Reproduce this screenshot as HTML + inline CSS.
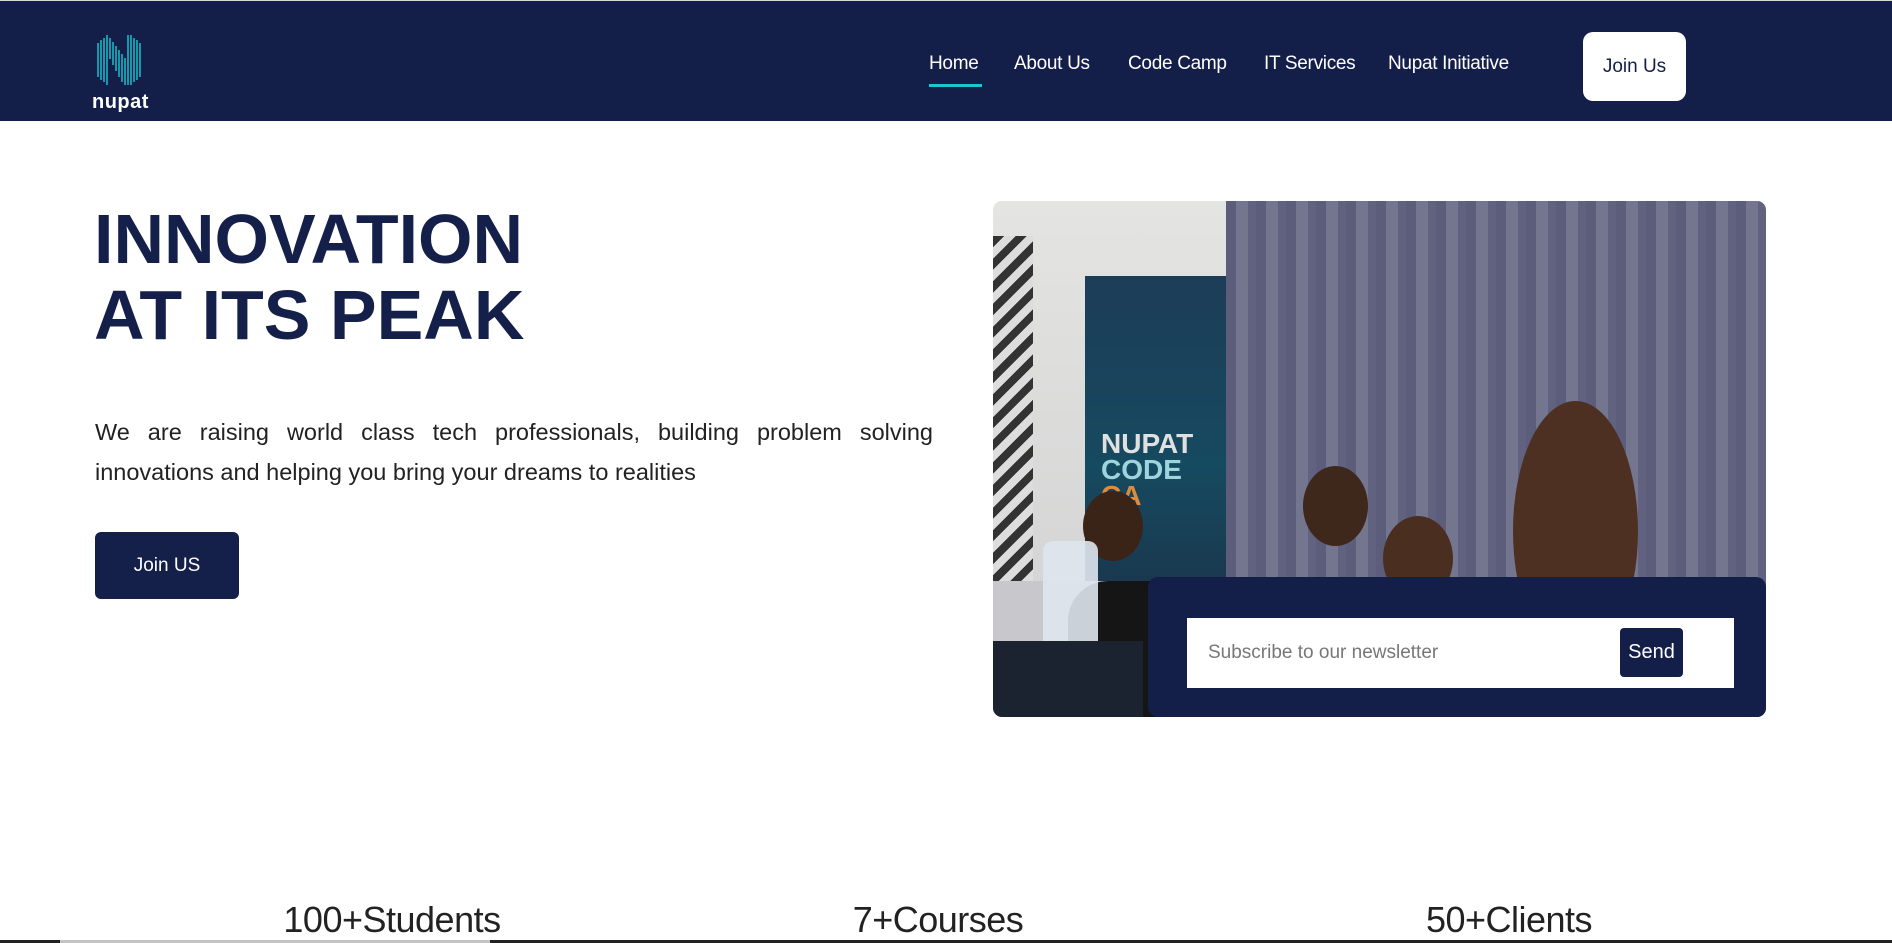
<!DOCTYPE html>
<html><head><meta charset="utf-8">
<style>
*{margin:0;padding:0;box-sizing:border-box}
html,body{width:1892px;height:943px;overflow:hidden;background:#fff;font-family:"Liberation Sans",sans-serif}
.nav{position:absolute;left:0;top:0;width:1892px;height:121px;background:#131e49;border-top:1px solid #d8d8d8}
.nav a{position:absolute;top:52px;color:#fff;font-size:19px;text-decoration:none;letter-spacing:-0.3px}
.ul{position:absolute;left:929px;top:83px;width:53px;height:3px;background:#18c7d3}
.jbtn{position:absolute;left:1583px;top:31px;width:103px;height:69px;background:#fff;border-radius:10px;color:#141f4a;font-size:19px;text-align:center;line-height:69px}
h1{position:absolute;left:94px;top:201px;font-size:70px;line-height:76px;color:#141f4a;font-weight:bold;letter-spacing:0px}
.p{position:absolute;left:95px;top:412px;width:838px;font-size:23.5px;line-height:40px;color:#222;text-align:justify;text-align-last:left}
.b2{position:absolute;left:95px;top:532px;width:144px;height:67px;background:#141f4a;border-radius:6px;color:#fff;font-size:19px;text-align:center;line-height:67px}
.img{position:absolute;left:993px;top:201px;width:773px;height:516px;border-radius:9px;overflow:hidden;background:#dcdcdc}
.img div{position:absolute}
.news{position:absolute;left:1148px;top:577px;width:618px;height:140px;background:#131e49;border-radius:10px}
.inp{position:absolute;left:1187px;top:618px;width:547px;height:70px;background:#fff}
.inp span{position:absolute;left:21px;top:24px;font-size:19px;color:#777}
.send{position:absolute;left:1620px;top:628px;width:63px;height:49px;background:#131e49;border-radius:4px;color:#fff;font-size:20px;text-align:center;line-height:49px}
.st{position:absolute;top:899px;font-size:36px;color:#222;transform:translateX(-50%);white-space:nowrap;letter-spacing:-0.5px}
</style></head><body>
<div class="nav">
<svg style="position:absolute;left:96px;top:32px" width="48" height="54" viewBox="0 0 48 54">
<g stroke="#17a6b8" stroke-width="1.8">
<line x1="2" y1="10" x2="2" y2="44"/><line x1="5" y1="7" x2="5" y2="47"/><line x1="8" y1="5" x2="8" y2="49"/><line x1="11" y1="2" x2="11" y2="52"/>
<line x1="14" y1="5" x2="14" y2="26"/><line x1="17" y1="9" x2="17" y2="32"/><line x1="20" y1="13" x2="20" y2="38"/><line x1="23" y1="17" x2="23" y2="44"/><line x1="26" y1="21" x2="26" y2="49"/><line x1="29" y1="25" x2="29" y2="52"/>
<line x1="35" y1="2" x2="35" y2="52"/><line x1="38" y1="5" x2="38" y2="49"/><line x1="41" y1="7" x2="41" y2="47"/><line x1="44" y1="10" x2="44" y2="44"/><line x1="32" y1="2" x2="32" y2="52"/>
</g></svg>
<div style="position:absolute;left:92px;top:90px;color:#fff;font-size:20px;font-weight:bold;letter-spacing:0.5px">nupat</div>
<a style="left:929px">Home</a>
<a style="left:1014px">About Us</a>
<a style="left:1128px">Code Camp</a>
<a style="left:1264px">IT Services</a>
<a style="left:1388px">Nupat Initiative</a>
<div class="ul"></div>
<div class="jbtn">Join Us</div>
</div>
<h1>INNOVATION<br>AT ITS PEAK</h1>
<div class="p">We are raising world class tech professionals, building problem solving innovations and helping you bring your dreams to realities</div>
<div class="b2">Join US</div>
<div class="img">
<div style="left:0;top:0;width:233px;height:516px;background:linear-gradient(#e4e4e2,#cfd0d0)"></div>
<div style="left:0;top:35px;width:40px;height:400px;background:repeating-linear-gradient(135deg,#333 0 8px,#ddd 8px 16px)"></div>
<div style="left:92px;top:75px;width:141px;height:380px;background:linear-gradient(#1d3c57,#164a60 50%,#1c2d44)"></div>
<div style="left:108px;top:230px;color:#e0e0e0;font-weight:bold;font-size:28px;line-height:26px">NUPAT<br><span style="color:#9fd4dc">CODE</span><br><span style="color:#e08a3a">CA</span></div>
<div style="left:233px;top:0;width:540px;height:516px;background:repeating-linear-gradient(90deg,#5c5d7a 0 10px,#74758f 10px 22px,#616280 22px 30px)"></div>
<div style="left:0;top:380px;width:380px;height:136px;background:#c8c8cc"></div>
<div style="left:90px;top:290px;width:60px;height:70px;border-radius:50%;background:#3a2418"></div>
<div style="left:75px;top:380px;width:140px;height:170px;border-radius:40px 40px 0 0;background:#151515"></div>
<div style="left:310px;top:265px;width:65px;height:80px;border-radius:50%;background:#3e271b"></div>
<div style="left:240px;top:400px;width:150px;height:170px;border-radius:40px 40px 0 0;background:#141414"></div>
<div style="left:390px;top:315px;width:70px;height:85px;border-radius:50%;background:#4a2e1f"></div>
<div style="left:345px;top:460px;width:140px;height:100px;border-radius:40px 40px 0 0;background:#161616"></div>
<div style="left:520px;top:200px;width:125px;height:260px;border-radius:50%;background:#4d3022"></div>
<div style="left:480px;top:420px;width:293px;height:120px;border-radius:60px 60px 0 0;background:#141414"></div>
<div style="left:50px;top:340px;width:55px;height:130px;border-radius:10px;background:#dfe6ee;opacity:.9"></div>
<div style="left:0;top:440px;width:150px;height:80px;background:#1b2230"></div>
</div>
<div class="news"></div>
<div class="inp"><span>Subscribe to our newsletter</span></div>
<div class="send">Send</div>
<div class="st" style="left:392px">100+Students</div>
<div class="st" style="left:938px">7+Courses</div>
<div class="st" style="left:1509px">50+Clients</div>
<div style="position:absolute;left:0;top:940px;width:1892px;height:3px;background:#222"></div>
<div style="position:absolute;left:60px;top:940px;width:430px;height:3px;background:#c4c4c4"></div>
</body></html>
